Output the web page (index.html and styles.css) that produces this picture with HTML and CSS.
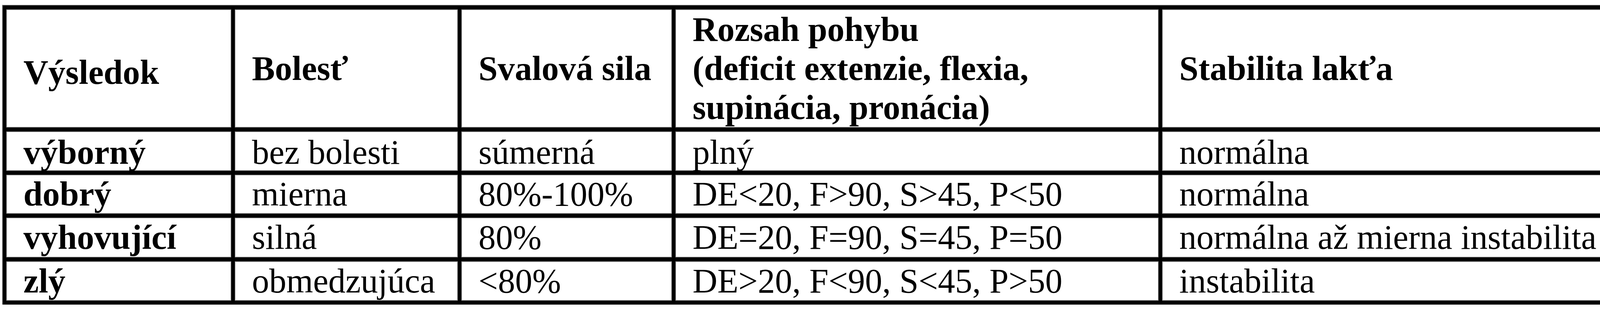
FILE: index.html
```html
<!DOCTYPE html>
<html lang="sk">
<head>
<meta charset="utf-8">
<title>Výsledok</title>
<link rel="stylesheet" href="styles.css">
</head>
<body>
<div class="grid" role="table">
  <div class="row" role="row">
    <div class="cell head first-head" role="columnheader">Výsledok</div>
    <div class="cell head" role="columnheader">Bolesť</div>
    <div class="cell head" role="columnheader">Svalová sila</div>
    <div class="cell head" role="columnheader">Rozsah pohybu<br>(deficit extenzie, flexia,<br>supinácia, pronácia)</div>
    <div class="cell head" role="columnheader">Stabilita lakťa</div>
  </div>
  <div class="row first-row" role="row">
    <div class="cell label" role="cell">výborný</div>
    <div class="cell" role="cell">bez bolesti</div>
    <div class="cell" role="cell">súmerná</div>
    <div class="cell" role="cell">plný</div>
    <div class="cell" role="cell">normálna</div>
  </div>
  <div class="row" role="row">
    <div class="cell label" role="cell">dobrý</div>
    <div class="cell" role="cell">mierna</div>
    <div class="cell" role="cell">80%-100%</div>
    <div class="cell" role="cell">DE&lt;20, F&gt;90, S&gt;45, P&lt;50</div>
    <div class="cell" role="cell">normálna</div>
  </div>
  <div class="row" role="row">
    <div class="cell label" role="cell">vyhovující</div>
    <div class="cell" role="cell">silná</div>
    <div class="cell" role="cell">80%</div>
    <div class="cell" role="cell">DE=20, F=90, S=45, P=50</div>
    <div class="cell" role="cell">normálna až mierna instabilita</div>
  </div>
  <div class="row" role="row">
    <div class="cell label" role="cell">zlý</div>
    <div class="cell" role="cell">obmedzujúca</div>
    <div class="cell" role="cell">&lt;80%</div>
    <div class="cell" role="cell">DE&gt;20, F&lt;90, S&lt;45, P&gt;50</div>
    <div class="cell" role="cell">instabilita</div>
  </div>
</div>
</body>
</html>
```
FILE: styles.css
```css
html, body {
  margin: 0;
  padding: 0;
  background: #ffffff;
}

body {
  font-family: "Liberation Serif", "Times New Roman", serif;
  color: #000000;
}

.grid {
  margin: 14px 0 0 7px;
  width: 4144px;
  box-sizing: border-box;
  display: grid;
  grid-template-columns: 576px 571px 539px 1237px 1167px;
  grid-template-rows: 303px 101px 100px 102px 101px;
  column-gap: 9px;
  row-gap: 10px;
  padding: 10px 9px;
  background: #000000;
  box-shadow: 0 0 0 1px #6a6a6a, 0 0 0 2px #c8c8c8;
}

.row {
  display: contents;
}

.cell {
  background: #ffffff;
  display: flex;
  align-items: center;
  padding: 0 0 0 44px;
  font-size: 88px;
  line-height: 100px;
  white-space: nowrap;
  box-shadow: inset 0 0 0 1px #7a7a7a, inset 0 0 0 2px #c4c4c4;
}

.head {
  font-weight: bold;
}

.first-head {
  padding-top: 20px;
}

.label {
  font-weight: bold;
}

.first-row .cell {
  padding-top: 6px;
}
```
